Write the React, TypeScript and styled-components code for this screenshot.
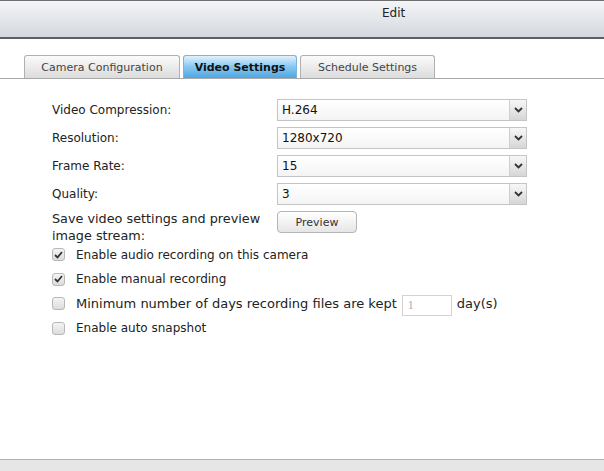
import React from "react";
import styled, { createGlobalStyle } from "styled-components";

const Global = createGlobalStyle`
  html, body { margin: 0; padding: 0; background: #fff; }
  body { font-family: "DejaVu Sans", Verdana, sans-serif; color: #222; }
  #root { width: 604px; height: 471px; overflow: hidden; }
`;

const Page = styled.div`
  width: 604px;
  height: 471px;
  display: flex;
  flex-direction: column;
  background: #fff;
`;

const Header = styled.div`
  box-sizing: border-box;
  height: 39px;
  border-top: 1px solid #6e6e6e;
  border-bottom: 2px solid #5b6060;
  background: linear-gradient(#f4f5f7, #d3d8de);
  display: flex;
  align-items: flex-start;
  padding-left: 382px;
  padding-top: 5px;
  font-size: 12px;
  color: #222;
`;

const TabBar = styled.div`
  margin-top: 15px;
  display: flex;
  gap: 3px;
  padding-left: 24px;
  border-bottom: 1px solid #a9a9a9;
  height: 24px;
  align-items: flex-end;
`;

const Tab = styled.div<{ $active?: boolean; $width: number }>`
  height: 23px;
  box-sizing: border-box;
  width: ${(p) => p.$width}px;
  display: flex;
  align-items: center;
  justify-content: center;
  border: 1px solid ${(p) => (p.$active ? "#7ab3dc" : "#b0b0b0")};
  border-bottom: none;
  border-radius: 3px 3px 0 0;
  background: ${(p) =>
    p.$active
      ? "linear-gradient(#e3f1fb, #8ccbf2 45%, #4ea6e2)"
      : "linear-gradient(#fbfbfb, #dcdcdc)"};
  color: ${(p) => (p.$active ? "#111" : "#444")};
  font-weight: ${(p) => (p.$active ? 600 : 400)};
  font-size: 11px;
  padding-top: 1px;
`;

const Form = styled.div`
  padding: 20px 0 0 52px;
  display: grid;
  grid-template-columns: 225px 250px;
  row-gap: 6px;
  align-items: center;
  font-size: 12px;
`;

const Label = styled.div`
  line-height: 17px;
`;

const Select = styled.div`
  height: 22px;
  box-sizing: border-box;
  border: 1px solid #c4c4c4;
  background: linear-gradient(#ffffff, #f4f4f4);
  display: flex;
  align-items: stretch;
`;

const SelectValue = styled.div`
  flex: 1;
  padding-left: 4px;
  display: flex;
  align-items: center;
  font-size: 12px;
  color: #111;
`;

const Arrow = styled.div`
  width: 16px;
  border-left: 1px solid #cfcfcf;
  background: linear-gradient(#f7f7f7, #d6d6d6);
  display: flex;
  align-items: center;
  justify-content: center;
`;

const PreviewLabel = styled.div`
  line-height: 17px;
  align-self: start;
  font-size: 12.8px;
  white-space: nowrap;
  margin-top: -1px;
`;

const Button = styled.div`
  width: 80px;
  height: 22px;
  box-sizing: border-box;
  border: 1px solid #b5b5b5;
  border-radius: 4px;
  background: linear-gradient(#ffffff, #e6e6e6);
  display: flex;
  align-items: center;
  justify-content: center;
  font-size: 11px;
  color: #333;
  align-self: start;
`;

const Checks = styled.div`
  padding: 2px 0 0 52px;
  display: flex;
  flex-direction: column;
  gap: 7.5px;
  font-size: 12px;
`;

const CheckRow = styled.div`
  display: flex;
  align-items: center;
  height: 17px;
  white-space: nowrap;
`;

const Wide = styled.span`
  font-size: 13px;
`;

const Box = styled.div`
  width: 13px;
  height: 13px;
  box-sizing: border-box;
  border: 1px solid #b8b8b8;
  border-radius: 3px;
  background: linear-gradient(#f4f4f4, #dcdcdc);
  display: flex;
  align-items: center;
  justify-content: center;
  margin-right: 11px;
`;

const DaysInput = styled.div`
  width: 50px;
  height: 21px;
  box-sizing: border-box;
  border: 1px solid #d2d2d2;
  margin-left: 5px;
  margin-right: 5px;
  margin-top: 3px;
  display: flex;
  align-items: center;
  padding-left: 5px;
  font-family: "Liberation Serif", serif;
  color: #aaa;
  font-size: 12px;
`;

const Spacer = styled.div`
  flex: 1;
`;

const Footer = styled.div`
  height: 11px;
  border-top: 1px solid #b3b3b3;
  background: #e6e6e6;
`;

const Chevron = () => (
  <svg width="9" height="6" viewBox="0 0 9 6">
    <path d="M1 1 L4.5 4.5 L8 1" fill="none" stroke="#333" strokeWidth="1.8" />
  </svg>
);

const Tick = () => (
  <svg width="9" height="8" viewBox="0 0 9 8">
    <path d="M1 4 L3.5 6.5 L8 1" fill="none" stroke="#333" strokeWidth="1.8" />
  </svg>
);

const SelectField = ({ value }: { value: string }) => (
  <Select>
    <SelectValue>{value}</SelectValue>
    <Arrow>
      <Chevron />
    </Arrow>
  </Select>
);

const Check = ({ checked, children }: { checked?: boolean; children: React.ReactNode }) => (
  <CheckRow>
    <Box>{checked && <Tick />}</Box>
    {children}
  </CheckRow>
);

export default function App() {
  return (
    <Page>
      <Global />
      <Header>Edit</Header>
      <TabBar>
        <Tab $width={156}>Camera Configuration</Tab>
        <Tab $width={114} $active>Video Settings</Tab>
        <Tab $width={135}>Schedule Settings</Tab>
      </TabBar>
      <Form>
        <Label>Video Compression:</Label>
        <SelectField value="H.264" />
        <Label>Resolution:</Label>
        <SelectField value="1280x720" />
        <Label>Frame Rate:</Label>
        <SelectField value="15" />
        <Label>Quality:</Label>
        <SelectField value="3" />
        <PreviewLabel>
          Save video settings and preview
          <br />
          image stream:
        </PreviewLabel>
        <Button>Preview</Button>
      </Form>
      <Checks>
        <Check checked>Enable audio recording on this camera</Check>
        <Check checked>Enable manual recording</Check>
        <Check>
          <Wide>Minimum number of days recording files are kept</Wide>
          <DaysInput>1</DaysInput>
          <Wide>day(s)</Wide>
        </Check>
        <Check>Enable auto snapshot</Check>
      </Checks>
      <Spacer />
      <Footer />
    </Page>
  );
}
